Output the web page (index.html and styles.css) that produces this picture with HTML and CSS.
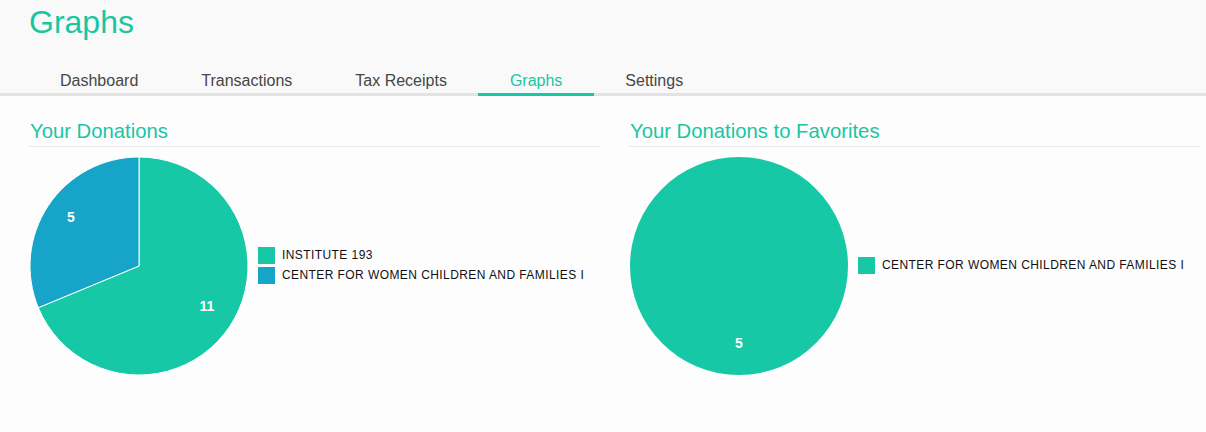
FILE: index.html
```html
<!DOCTYPE html>
<html lang="en">
<head>
<meta charset="utf-8">
<title>Graphs</title>
<link rel="stylesheet" href="styles.css">
</head>
<body>
<header class="header">
  <h1 class="page-title">Graphs</h1>
  <nav class="tabs">
    <a class="tab">Dashboard</a>
    <a class="tab">Transactions</a>
    <a class="tab">Tax Receipts</a>
    <a class="tab tab-active">Graphs</a>
    <a class="tab">Settings</a>
  </nav>
</header>
<main class="content">
  <section class="panel">
    <h2 class="panel-title">Your Donations</h2>
    <div class="chart-row">
      <svg class="pie" width="218" height="218" viewBox="0 0 218 218">
        <path d="M109,109 L109,0 A109,109 0 1,1 8.3,150.7 Z" fill="#17c8a6" stroke="#ffffff" stroke-width="1"/>
        <path d="M109,109 L8.3,150.7 A109,109 0 0,1 109,0 Z" fill="#16a5c9" stroke="#ffffff" stroke-width="1"/>
        <text class="pie-label" x="41" y="60">5</text>
        <text class="pie-label" x="177" y="149">11</text>
      </svg>
      <ul class="legend">
        <li class="legend-item"><span class="swatch swatch-green"></span>INSTITUTE 193</li>
        <li class="legend-item"><span class="swatch swatch-blue"></span>CENTER FOR WOMEN CHILDREN AND FAMILIES I</li>
      </ul>
    </div>
  </section>
  <section class="panel">
    <h2 class="panel-title">Your Donations to Favorites</h2>
    <div class="chart-row">
      <svg class="pie" width="218" height="218" viewBox="0 0 218 218">
        <circle cx="109" cy="109" r="109" fill="#17c8a6"/>
        <text class="pie-label" x="109" y="186">5</text>
      </svg>
      <ul class="legend">
        <li class="legend-item"><span class="swatch swatch-green"></span>CENTER FOR WOMEN CHILDREN AND FAMILIES I</li>
      </ul>
    </div>
  </section>
</main>
</body>
</html>
```

FILE: styles.css
```css
* {
  box-sizing: border-box;
}

html, body {
  margin: 0;
  padding: 0;
}

body {
  background: #fdfdfd;
  font-family: "Liberation Sans", Arial, sans-serif;
  width: 1206px;
  height: 432px;
  overflow: hidden;
}

.header {
  background: #f9f9f9;
  border-bottom: 3px solid #e3e3e3;
  padding-left: 29px;
}

.page-title {
  margin: 0;
  padding-top: 2px;
  height: 42px;
  font-size: 32px;
  line-height: 40px;
  font-weight: normal;
  color: #19c6a2;
}

.tabs {
  display: flex;
  margin-top: 20px;
  margin-left: -0.5px;
}

.tab {
  display: block;
  padding: 9px 31.5px 2px;
  font-size: 16px;
  line-height: 20px;
  color: #464646;
  border-bottom: 3px solid transparent;
  margin-bottom: -3px;
  cursor: pointer;
}

.tab-active {
  color: #19c6a2;
  border-bottom-color: #17c8a6;
}

.content {
  display: flex;
  gap: 28px;
  padding: 23px 0 0 28px;
}

.panel {
  width: 572px;
}

.panel-title {
  margin: 0;
  padding: 0 0 3px 2px;
  font-size: 20.3px;
  line-height: 24px;
  font-weight: normal;
  color: #19c6a2;
  border-bottom: 1px solid #ebebeb;
}

.chart-row {
  display: flex;
  align-items: center;
  margin-top: 10px;
  padding-left: 2px;
}

.pie {
  display: block;
  flex: none;
}

.pie-label {
  fill: #ffffff;
  font-family: "Liberation Sans", Arial, sans-serif;
  font-size: 14px;
  font-weight: bold;
  text-anchor: middle;
  dominant-baseline: central;
}

.legend {
  list-style: none;
  margin: 0 0 2px 10px;
  padding: 0;
  display: flex;
  flex-direction: column;
  gap: 3px;
}

.legend-item {
  display: flex;
  align-items: center;
  font-size: 12px;
  letter-spacing: 0.42px;
  color: #111111;
  line-height: 17px;
  white-space: nowrap;
}

.swatch {
  display: block;
  width: 17px;
  height: 17px;
  margin-right: 7px;
}

.swatch-green {
  background: #17c8a6;
}

.swatch-blue {
  background: #16a5c9;
}
```
